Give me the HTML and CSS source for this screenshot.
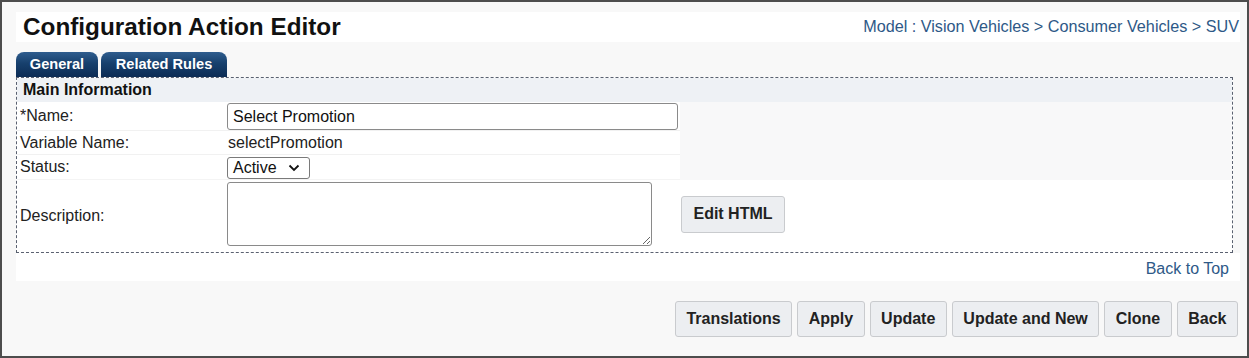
FILE: index.html
```html
<!DOCTYPE html>
<html>
<head>
<meta charset="utf-8">
<link rel="stylesheet" href="styles.css">
</head>
<body>
<div class="frame">
  <header class="title-bar">
    <h1 class="title">Configuration Action Editor</h1>
    <div class="crumb">Model : Vision Vehicles &gt; Consumer Vehicles &gt; SUV</div>
  </header>
  <nav class="tabs">
    <span class="tab tab-general">General</span>
    <span class="tab tab-rules">Related Rules</span>
  </nav>
  <section class="panel">
    <div class="panel-head">Main Information</div>
    <div class="form-grid">
      <div class="cell label r1">*Name:</div>
      <div class="cell field r1"><input class="text-input" type="text" value="Select Promotion"></div>
      <div class="side"></div>
      <div class="cell label r2">Variable Name:</div>
      <div class="cell field r2 value">selectPromotion</div>
      <div class="cell label r3">Status:</div>
      <div class="cell field r3"><span class="select">Active<svg class="chev" viewBox="0 0 12 8" width="12" height="8"><path d="M1.5 1.5 L6 6 L10.5 1.5" fill="none" stroke="#111" stroke-width="1.8"/></svg></span></div>
      <div class="cell label r4">Description:</div>
      <div class="cell field r4"><textarea class="area"></textarea></div>
      <div class="cell extra r4"><button class="btn btn-edit">Edit HTML</button></div>
    </div>
  </section>
  <div class="back-row"><a class="back-link">Back to Top</a></div>
  <div class="actions">
    <button class="btn">Translations</button>
    <button class="btn">Apply</button>
    <button class="btn">Update</button>
    <button class="btn">Update and New</button>
    <button class="btn">Clone</button>
    <button class="btn">Back</button>
  </div>
</div>
</body>
</html>
```

FILE: styles.css
```css
* { box-sizing: border-box; }
html, body { margin: 0; padding: 0; }
body {
  font-family: "Liberation Sans", Arial, sans-serif;
  color: #222;
  width: 1249px;
  height: 358px;
  overflow: hidden;
}
.frame {
  width: 1249px;
  height: 358px;
  border: 2px solid #4d4d4d;
  background: #f8f8f8;
  padding: 10px 7px 0 14px;
}
.title-bar {
  display: flex;
  justify-content: space-between;
  align-items: center;
  background: #fff;
  height: 30px;
  padding: 0 1px 0 7px;
}
.title {
  margin: 0;
  font-size: 24.3px;
  font-weight: bold;
  color: #111;
  line-height: 30px;
}
.crumb {
  font-size: 16.2px;
  color: #2e5987;
  line-height: 30px;
  padding-bottom: 3px;
}
.tabs {
  display: flex;
  gap: 3px;
  margin-top: 10px;
  height: 25px;
}
.tab {
  display: flex;
  align-items: center;
  justify-content: center;
  height: 25px;
  color: #fff;
  font-weight: bold;
  font-size: 14.6px;
  border-radius: 8px 8px 0 0;
  background: linear-gradient(#2f5d8e 0%, #17406d 45%, #0c2c55 100%);
  padding-bottom: 2px;
}
.tab-general { width: 82px; }
.tab-rules { width: 126px; }
.panel {
  width: 1217px;
  border: 1px dashed #5a6170;
  background: #fff;
}
.panel-head {
  height: 24px;
  background: #eef1f5;
  font-weight: bold;
  font-size: 16px;
  padding: 3px 0 0 6px;
  color: #111;
}
.form-grid {
  display: grid;
  grid-template-columns: 210px 453px 1fr;
  grid-template-rows: 29px 24px 25px 72px;
}
.cell {
  display: flex;
  align-items: center;
  font-size: 16px;
}
.label { padding-left: 3px; color: #222; }
.r1, .r2 { border-bottom: 1px solid #f1f1f1; }
.r3 { border-bottom: 1px solid #f4f4f4; }
.r1.field { align-items: flex-start; padding-top: 1px; }
.side {
  grid-column: 3;
  grid-row: 1 / span 3;
  background: #f8f8f9;
}
.value { padding-left: 1px; color: #222; }
.text-input {
  width: 451px;
  height: 27px;
  border: 1px solid #8a8a8a;
  border-radius: 3px;
  font-family: "Liberation Sans", Arial, sans-serif;
  font-size: 16px;
  padding: 0 5px;
  color: #111;
  background: #fff;
}
.select {
  display: inline-flex;
  align-items: center;
  justify-content: space-between;
  width: 83px;
  height: 22px;
  border: 1px solid #7a7a7a;
  border-radius: 3px;
  padding: 0 9px 0 5px;
  font-size: 16px;
  color: #111;
  margin-top: 2px;
}
.chev { display: block; }
.r4.field { align-items: flex-start; padding-top: 2px; }
.area {
  width: 425px;
  height: 64px;
  border: 1px solid #8a8a8a;
  border-radius: 3px;
  resize: both;
  background: #fff;
}
.extra { padding-left: 1px; padding-bottom: 4px; }
.btn {
  font-family: "Liberation Sans", Arial, sans-serif;
  font-weight: bold;
  font-size: 16px;
  color: #222;
  background: #eceef1;
  border: 1px solid #c9cbce;
  border-radius: 3px;
  height: 36px;
  padding: 0 10.5px;
}
.btn-edit { width: 104px; height: 37px; padding: 0; }
.back-row {
  display: flex;
  justify-content: flex-end;
  align-items: center;
  background: #fff;
  height: 28px;
  padding: 3px 11px 0 0;
}
.back-link {
  font-size: 16px;
  color: #2e5987;
  cursor: pointer;
}
.actions {
  display: flex;
  justify-content: flex-end;
  gap: 5px;
  margin-top: 20px;
  padding-right: 2px;
}
```
